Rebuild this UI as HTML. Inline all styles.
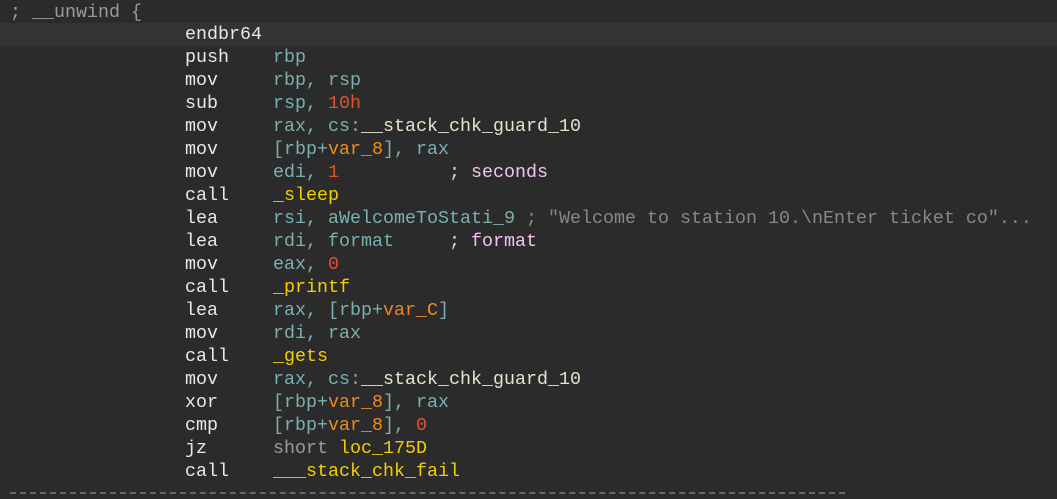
<!DOCTYPE html>
<html><head><meta charset="utf-8"><style>
html,body{margin:0;padding:0;background:#2b2b2b;width:1057px;height:499px;overflow:hidden}
.l{position:absolute;left:0;width:1057px;height:23px;font-family:"Liberation Mono",monospace;font-size:18.33px;line-height:23px;white-space:pre;color:#e8e8e8}
.m{position:absolute;left:185px}
.h{background:#333333}
.r{color:#7ab0b0}.n{color:#e0532e}.v{color:#f08a1e}.y{color:#f2d000}.c{color:#f0c4f0}.g{color:#888}.s{color:#9a9a9a}.w{color:#e8e2cc}
.d{position:absolute;top:492px;left:10px;width:835px;border-top:2px dashed #666}
</style></head><body>
<div class="l" style="top:1px"><span class="s" style="position:absolute;left:10px">; __unwind {</span></div>
<div class="l h" style="top:23px"><span class="m">endbr64</span></div>
<div class="l" style="top:46px"><span class="m">push    <span class="r">rbp</span></span></div>
<div class="l" style="top:69px"><span class="m">mov     <span class="r">rbp, rsp</span></span></div>
<div class="l" style="top:92px"><span class="m">sub     <span class="r">rsp, </span><span class="n">10h</span></span></div>
<div class="l" style="top:115px"><span class="m">mov     <span class="r">rax, cs:</span><span class="w">__stack_chk_guard_10</span></span></div>
<div class="l" style="top:138px"><span class="m">mov     <span class="r">[rbp+</span><span class="v">var_8</span><span class="r">], rax</span></span></div>
<div class="l" style="top:161px"><span class="m">mov     <span class="r">edi, </span><span class="n">1</span>          <span class="c">; seconds</span></span></div>
<div class="l" style="top:184px"><span class="m">call    <span class="y">_sleep</span></span></div>
<div class="l" style="top:207px"><span class="m">lea     <span class="r">rsi, aWelcomeToStati_9</span> <span class="g">; "Welcome to station 10.\nEnter ticket co"...</span></span></div>
<div class="l" style="top:230px"><span class="m">lea     <span class="r">rdi, format</span>     <span class="c">; format</span></span></div>
<div class="l" style="top:253px"><span class="m">mov     <span class="r">eax, </span><span class="n">0</span></span></div>
<div class="l" style="top:276px"><span class="m">call    <span class="y">_printf</span></span></div>
<div class="l" style="top:299px"><span class="m">lea     <span class="r">rax, [rbp+</span><span class="v">var_C</span><span class="r">]</span></span></div>
<div class="l" style="top:322px"><span class="m">mov     <span class="r">rdi, rax</span></span></div>
<div class="l" style="top:345px"><span class="m">call    <span class="y">_gets</span></span></div>
<div class="l" style="top:368px"><span class="m">mov     <span class="r">rax, cs:</span><span class="w">__stack_chk_guard_10</span></span></div>
<div class="l" style="top:391px"><span class="m">xor     <span class="r">[rbp+</span><span class="v">var_8</span><span class="r">], rax</span></span></div>
<div class="l" style="top:414px"><span class="m">cmp     <span class="r">[rbp+</span><span class="v">var_8</span><span class="r">], </span><span class="n">0</span></span></div>
<div class="l" style="top:437px"><span class="m">jz      <span class="s">short </span><span class="y">loc_175D</span></span></div>
<div class="l" style="top:460px"><span class="m">call    <span class="y">___stack_chk_fail</span></span></div>
<div class="d"></div>
</body></html>
